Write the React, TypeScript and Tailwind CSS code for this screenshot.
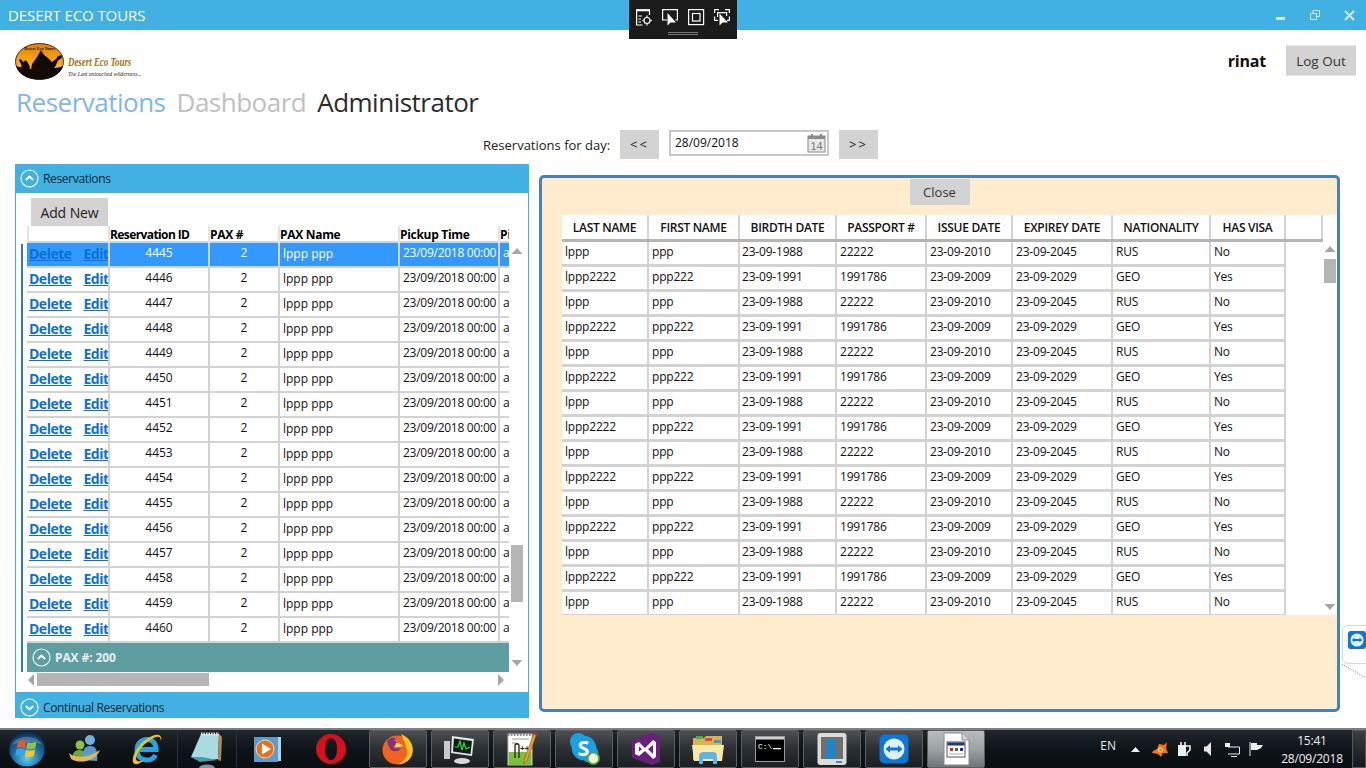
import React from "react";

const leftRows = Array.from({ length: 16 }, (_, i) => 4445 + i);
const rightRows = Array.from({ length: 15 }, (_, i) => i);
const leftCols = "grid grid-cols-[83px_100px_70px_120px_100px_9px]";
const rightCols = "grid grid-cols-[87px_91px_97px_90px_86px_100px_98px_75px]";

function Chevron({ up, dim }: { up: boolean; dim?: boolean }) {
  return (
    <svg width="19" height="19" viewBox="0 0 19 19" className="shrink-0">
      <circle cx="9.5" cy="9.5" r="8.5" fill="none" stroke={dim ? "#e8f2f2" : "#ffffff"} strokeWidth="1.2" />
      <path d={up ? "M5.8 11 L9.5 7.6 L13.2 11" : "M5.8 8 L9.5 11.4 L13.2 8"} fill="none" stroke="#ffffff" strokeWidth="2" />
    </svg>
  );
}

function Tri({ dir, color = "#a6a6a6" }: { dir: "up" | "down" | "left" | "right"; color?: string }) {
  const p = {
    up: "M0 8 L6 1 L12 8 Z",
    down: "M0 1 L12 1 L6 8 Z",
    left: "M7 0 L7 12 L1 6 Z",
    right: "M1 0 L1 12 L7 6 Z",
  }[dir];
  const vertical = dir === "up" || dir === "down";
  return (
    <svg width={vertical ? 12 : 8} height={vertical ? 8 : 12} viewBox={vertical ? "0 0 12 9" : "0 0 8 12"} className="shrink-0">
      <path d={p} fill={color} />
    </svg>
  );
}

function Logo() {
  return (
    <div className="flex h-[37px]">
      <svg width="49" height="37" viewBox="0 0 49 37" className="shrink-0">
        <defs>
          <linearGradient id="sun" x1="0" x2="0" y1="0" y2="1">
            <stop offset="0" stopColor="#e07d0a" />
            <stop offset="0.6" stopColor="#fbb11c" />
            <stop offset="1" stopColor="#f09a15" />
          </linearGradient>
        </defs>
        <ellipse cx="24.5" cy="18.5" rx="24" ry="18" fill="url(#sun)" stroke="#1a1005" strokeWidth="0.8" />
        <path d="M1 23 C8 25 16 27 25 26 C34 25 42 26 48 23 C46 31 36 36.6 24.5 36.6 C12 36.6 3 31 1 23 Z" fill="#100b06" />
        <path d="M16 27 L17 21 L22 14 L26 7 L29 12 L33 15 L37 19 L41 16 L43 13 L47 12 L46.5 15 L43 17.5 L40 24 L36 28 Z" fill="#100b06" />
        <path d="M6 27 L6.5 22 L4 17 L6 16 L8 19 L11 17 L13 20 L15 24 L14 28 Z" fill="#100b06" />
        <text x="24.5" y="6.5" textAnchor="middle" fontSize="4.2" fontWeight="bold" fontFamily="Liberation Serif, serif" fill="#1b1206">Desert Eco Tours</text>
      </svg>
      <div className="flex flex-col ml-[4px] pt-[13px] leading-none">
        <span className="font-['Liberation_Serif',serif] font-bold italic text-[12px] leading-[12px] text-[#a86f14] scale-x-[0.74] origin-left whitespace-nowrap w-[64px]">Desert Eco Tours</span>
        <span className="font-['Liberation_Serif',serif] italic text-[5.6px] leading-[7px] mt-[3px] text-[#222] whitespace-nowrap">The Last untouched wilderness...</span>
      </div>
    </div>
  );
}

function Toolbar() {
  return (
    <div className="absolute left-[629px] top-0 w-[108px] h-[39px] bg-[#1b1b1b] z-10 flex flex-col items-center">
      <svg width="96" height="20" viewBox="0 0 96 20" className="mt-[8px]">
        <g fill="none" stroke="#fff" strokeWidth="1.2">
          <path d="M1.6 3 V17 H7.5 M14.5 3 V7" />
          <path d="M1 2.2 H15" strokeWidth="2.2" />
          <path d="M3.5 8 H7 M3.5 11 H6 M3.5 14 H6" />
          <circle cx="12" cy="12.5" r="3" />
          <path d="M12 7.5 V9.5 M12 15.5 V17.5 M7.3 12.5 H9 M15 12.5 H17" />
          <path d="M32 12 H27.6 V1.6 H42.4 V12 H40.5" />
          <rect x="53.6" y="1.6" width="15" height="15" />
          <rect x="57.5" y="5.5" width="7.5" height="7.5" />
          <path d="M79.6 5 V1.6 H84 M90 1.6 H94.4 V5 M79.6 8.5 V12.4 H83 M94.4 8.5 V12.4 H92" />
          <path d="M82.6 9 V4.6 H91.6 V8" />
        </g>
        <path d="M32.5 5 V17.5 L35.5 14.5 L41 14.5 Z" fill="#fff" />
        <path d="M84.5 5.5 V17.5 L87.5 14.5 L93 14.5 Z" fill="#fff" />
      </svg>
      <div className="w-[30px] h-[3px] mt-[4px] border-y border-[#777]" />
    </div>
  );
}

function WinControls() {
  return (
    <div className="flex items-center gap-[24px] pr-[11px]">
      <svg width="10" height="10" viewBox="0 0 10 10"><rect x="0" y="7" width="9" height="3" fill="#cfeaf6" /></svg>
      <svg width="10" height="10" viewBox="0 0 10 10"><path d="M0.5 3.5 H6.5 V9.5 H0.5 Z M3 3 V0.5 H9.5 V6.5 H7" fill="none" stroke="#cfeaf6" /></svg>
      <svg width="11" height="11" viewBox="0 0 11 11"><path d="M1 1 L10 10 M10 1 L1 10" stroke="#cfeaf6" strokeWidth="2" /></svg>
    </div>
  );
}

function LeftPanel() {
  return (
    <div className="w-[514px] h-[554px] flex flex-col shrink-0">
      <div className="h-[29px] bg-[#41b0e2] flex items-center pl-[5px] gap-[4px] text-[12px] tracking-[-0.35px] text-[#0c2733]">
        <Chevron up />
        <span>Reservations</span>
      </div>
      <div className="h-[499px] bg-white border-x border-[#41b0e2] flex flex-col">
        <button className="ml-[15px] mt-[5px] w-[77px] h-[28px] bg-[#d3d3d3] text-[14px] tracking-[-0.1px] text-[#222] shrink-0">Add New</button>
        <div className="flex flex-1 min-h-0">
          <div className="w-[5px] shrink-0" />
          <div className="w-[6px] shrink-0 mt-[18px] mb-[20px] border-l-2 border-[#2e7fae]" />
          <div className="w-[482px] shrink-0 flex flex-col overflow-hidden">
            <div className={`${leftCols} h-[17px] shrink-0 border-b-2 border-[#d3d3d3] text-[12px] font-bold text-black leading-[17px]`}>
              <div className="border-x-2 border-[#e3e3e3]" />
              <div className="border-r-2 border-[#e3e3e3] tracking-[-0.6px] whitespace-nowrap overflow-hidden">Reservation ID</div>
              <div className="border-r-2 border-[#e3e3e3] tracking-[-0.3px]">PAX #</div>
              <div className="border-r-2 border-[#e3e3e3] tracking-[-0.3px]">PAX Name</div>
              <div className="border-r-2 border-[#e3e3e3] tracking-[-0.3px]">Pickup Time</div>
              <div className="overflow-hidden">Pi</div>
            </div>
            {leftRows.map((id, i) => {
              const sel = i === 0;
              return (
                <div key={id} className={`${leftCols} h-[25px] shrink-0 border-b-2 border-[#d3d3d3] text-[12px] leading-[20px] ${sel ? "bg-[#3399ff] text-white" : "text-[#111]"}`}>
                  <div className="border-r-2 border-[#d3d3d3] flex gap-[12px] overflow-hidden text-[14px] font-bold underline text-[#0b6fd4] tracking-[-0.5px] whitespace-nowrap leading-[21px] pl-[2px]">
                    <span>Delete</span>
                    <span>Edit</span>
                  </div>
                  <div className="border-r-2 border-[#d3d3d3] text-center">{id}</div>
                  <div className="border-r-2 border-[#d3d3d3] text-center">2</div>
                  <div className="border-r-2 border-[#d3d3d3] pl-[3px] leading-[22px]">lppp ppp</div>
                  <div className="border-r-2 border-[#d3d3d3] pl-[3px] tracking-[-0.27px] whitespace-nowrap overflow-hidden">23/09/2018 00:00</div>
                  <div className="pl-[3px] overflow-hidden">a</div>
                </div>
              );
            })}
            <div className="h-[29px] shrink-0 bg-[#5f9ea0] flex items-center pl-[5px] gap-[4px] text-[12px] font-bold text-[#e6efef] tracking-[-0.1px]">
              <Chevron up dim />
              <span>PAX #: 200</span>
            </div>
            <div className="h-[13px] shrink-0 flex items-center mt-[1px]">
              <Tri dir="left" />
              <div className="w-[172px] h-[13px] bg-[#b5b5b5] ml-[2px]" />
              <div className="flex-1" />
              <div className="mr-[4px]"><Tri dir="right" /></div>
            </div>
          </div>
          <div className="w-[14px] shrink-0 flex flex-col items-center pt-[21px] ml-[1px]">
            <Tri dir="up" />
            <div className="w-[12px] h-[57px] bg-[#b5b5b5] mt-[290px]" />
            <div className="mt-[57px]"><Tri dir="down" /></div>
          </div>
        </div>
      </div>
      <div className="h-[26px] bg-[#41b0e2] flex items-center pl-[5px] pt-[5px] gap-[4px] text-[12px] tracking-[-0.35px] text-[#0c2733]">
        <Chevron up={false} />
        <span>Continual Reservations</span>
      </div>
    </div>
  );
}

function RightPanel() {
  const a = ["lppp", "ppp", "23-09-1988", "22222", "23-09-2010", "23-09-2045", "RUS", "No"];
  const b = ["lppp2222", "ppp222", "23-09-1991", "1991786", "23-09-2009", "23-09-2029", "GEO", "Yes"];
  const heads = ["LAST NAME", "FIRST NAME", "BIRDTH DATE", "PASSPORT #", "ISSUE DATE", "EXPIREY DATE", "NATIONALITY", "HAS VISA"];
  const widths = ["w-[87px]", "w-[91px]", "w-[97px]", "w-[90px]", "w-[86px]", "w-[100px]", "w-[98px]", "w-[75px]"];
  return (
    <div className="mt-[11px] w-[801px] h-[537px] bg-[#ffebcd] border-[3px] border-[#4682b4] rounded-[5px] flex flex-col items-center shrink-0">
      <button className="w-[60px] h-[26px] mt-[1px] pt-[1px] bg-[#d3d3d3] text-[13px] text-[#333] shrink-0">Close</button>
      <div className="self-start ml-[20px] mt-[10px] w-[775px] h-[400px] bg-white flex flex-col overflow-hidden">
        <div className="w-[761px] h-[27px] shrink-0 flex border-b-[3px] border-[#b4b4b4] text-[12px] font-semibold text-[#111] tracking-[-0.3px]">
          {heads.map((h, i) => (
            <div key={h} className={`${widths[i]} border-r-2 border-[#d3d3d3] flex items-center justify-center whitespace-nowrap pt-[1px]`}>{h}</div>
          ))}
          <div className="w-[37px] border-r-2 border-[#d3d3d3]" />
        </div>
        <div className="flex flex-1 min-h-0">
          <div className="w-[724px] shrink-0 flex flex-col">
            {rightRows.map((i) => (
              <div key={i} className={`${rightCols} h-[25px] shrink-0 border-b-[3px] border-[#d3d3d3] text-[12px] text-[#111] leading-[20px]`}>
                {(i % 2 ? b : a).map((t, j) => (
                  <div key={j} className={`${j < 2 ? "pl-[3px]" : j === 2 ? "pl-[2px]" : "pl-[3px]"} border-r-2 border-[#d3d3d3] tracking-[-0.2px] whitespace-nowrap overflow-hidden`}>{t}</div>
                ))}
              </div>
            ))}
          </div>
          <div className="w-[14px] ml-[37px] flex flex-col items-center pt-[3px]">
            <Tri dir="up" />
            <div className="w-[12px] h-[24px] bg-[#b5b5b5] mt-[6px]" />
            <div className="mt-[320px]"><Tri dir="down" /></div>
          </div>
        </div>
      </div>
    </div>
  );
}

/* ---------- taskbar icons ---------- */
const Orb = () => (
  <svg width="38" height="38" viewBox="0 0 38 38">
    <defs>
      <radialGradient id="orb" cx="0.5" cy="0.75" r="0.7">
        <stop offset="0" stopColor="#5fd0ee" />
        <stop offset="0.55" stopColor="#1b6ea6" />
        <stop offset="1" stopColor="#0d2f4e" />
      </radialGradient>
    </defs>
    <circle cx="19" cy="19" r="18" fill="url(#orb)" stroke="#0b2238" />
    <path d="M4 15 C8 4 30 4 34 15 C26 11 12 11 4 15 Z" fill="#ffffff" opacity="0.22" />
    <path d="M10 12 C13 10 15 10 18 11.5 L16.8 18 C14 16.5 11.5 16.5 8.8 18 Z" fill="#f0562a" />
    <path d="M19.5 12 C22 13.3 25 13.3 28.5 11.5 L27.3 18 C24 19.5 21 19.5 18.4 18.3 Z" fill="#8cc63e" />
    <path d="M8.5 19.5 C11 18 14 18 16.4 19.5 L15.2 26 C12.8 24.7 10 24.7 7.3 26 Z" fill="#35a6e8" />
    <path d="M18 20 C20.7 21 24 21 27 19.5 L25.8 26 C22.8 27.5 19.5 27.5 16.9 26.3 Z" fill="#fdc32d" />
  </svg>
);
const Messenger = () => (
  <svg width="34" height="34" viewBox="0 0 34 34">
    <circle cx="12" cy="13" r="4.5" fill="#8bc34a" />
    <path d="M5 28 C4 20 7 18 12 18 C16 18 18 21 18 28 Z" fill="#6ea53a" />
    <circle cx="22" cy="8" r="5" fill="#6fb1df" />
    <path d="M15 28 C14 17 17 14 22 14 C28 14 30 18 29 29 Z" fill="#5a9ad0" />
    <path d="M1 21 C8 27 20 26 32 18 C28 28 14 33 3 27 Z" fill="#e7b755" />
  </svg>
);
const IE = () => (
  <svg width="34" height="34" viewBox="0 0 34 34">
    <path d="M8 17.5 H26 C26 11 22 7.5 17 7.5 C11 7.5 7 12 7 18 C7 24 11 28 17 28 C21 28 24 26 25.5 23" fill="none" stroke="#27a4e0" strokeWidth="5" />
    <path d="M29 3 C23 1 10 10 5 20 C2 26 2 31 5 32 C8 33 12 30 14 28 C9 30 6 30 6 26 C7 18 19 7 26 5 C29 4 31 5 31 9 C32 6 31 4 29 3 Z" fill="#f1c01d" />
  </svg>
);
const Notepad = () => (
  <svg width="34" height="38" viewBox="0 0 34 38">
    <path d="M1 27 L11 4 L29 4 L28 29 L10 31 Z" fill="#a9dbe0" />
    <path d="M1 27 L10 32 L28 30 L12 27 Z" fill="#4d98ae" />
    <path d="M29 4 L32 7 L31 31 L28 30 Z" fill="#b08a50" />
    <path d="M11 4 L29 4" stroke="#e6e6e6" strokeWidth="3" strokeDasharray="1.5 1" />
    <ellipse cx="17" cy="38" rx="8" ry="3.5" fill="#dbeaf5" opacity="0.6" />
  </svg>
);
const WMP = () => (
  <svg width="30" height="30" viewBox="0 0 30 30">
    <rect x="5" y="3" width="24" height="24" fill="#b5d3ea" />
    <rect x="2" y="3" width="24" height="25" fill="#5c9ccc" />
    <circle cx="13" cy="15" r="9" fill="#e8731c" stroke="#fbd7b0" />
    <path d="M10 9.5 L19 15 L10 20.5 Z" fill="#fff" />
  </svg>
);
const Opera = () => (
  <svg width="32" height="32" viewBox="0 0 32 32">
    <path fillRule="evenodd" d="M16 1 A15 15 0 1 0 16 31 A15 15 0 1 0 16 1 Z M16 5 C20 5 22 10 22 16 C22 22 20 27 16 27 C12 27 10 22 10 16 C10 10 12 5 16 5 Z" fill="#d8101d" />
  </svg>
);
const Firefox = () => (
  <svg width="34" height="34" viewBox="0 0 34 34">
    <circle cx="16" cy="18" r="14.5" fill="#f0631f" />
    <path d="M20 2 C29 6 33 13 31.5 21 C30 28 24 32 17 32.5 C25 29 28 22 25 15 C24 10 22 6 20 2 Z" fill="#ffc51c" />
    <path d="M6 9 C8 6 12 5 15 6 C12 8 14 10 17 11 C16 13 14 13 12 14 C13 17 16 17 20 16 C18 20 13 20 10 18 C8 16 7 12 6 9 Z" fill="#6a2f94" opacity="0.9" />
    <path d="M15 11 C18 11 22 13 22 14 C19 15 17 15 14 15 Z" fill="#ffe06b" />
  </svg>
);
const TaskMgr = () => (
  <svg width="34" height="34" viewBox="0 0 34 34">
    <rect x="1" y="9" width="6" height="18" fill="#c9c9c9" />
    <path d="M9 4 L31 7 L29 24 L8 21 Z" fill="#dfe5e5" />
    <path d="M11 6.5 L29 9 L27.5 22 L10 19.5 Z" fill="#0a1f14" />
    <path d="M12 15 L15 15 L17 9 L19 18 L21 11 L23 17 L27 15" fill="none" stroke="#32d74b" strokeWidth="1.2" />
    <ellipse cx="19" cy="29" rx="8" ry="3" fill="#d8d8d8" />
  </svg>
);
const NotepadPP = () => (
  <svg width="34" height="36" viewBox="0 0 34 36">
    <rect x="3" y="3" width="24" height="31" fill="#fbfbf5" stroke="#bdbdbd" />
    <rect x="3.5" y="21" width="23" height="13" fill="#7bbf3a" />
    <path d="M3 4 H27" stroke="#888" strokeWidth="2" strokeDasharray="1.5 1.5" />
    <path d="M7 8 H24 M7 12 H12" stroke="#999" />
    <path d="M10 27 V15 C10 12 14 12 14 15 V27" fill="none" stroke="#222" strokeWidth="1.3" />
    <text x="15" y="20" fontSize="8" fontWeight="bold" fill="#222" fontFamily="Liberation Sans, sans-serif">++</text>
    <path d="M32 2 L22 30 L19 33 L19 29 L29 2 Z" fill="#e0a22a" stroke="#7a4b14" strokeWidth="0.5" />
    <path d="M29 1 L33 3 L32 5 L28 3 Z" fill="#b5332a" />
  </svg>
);
const Skype = () => (
  <svg width="32" height="34" viewBox="0 0 34 36">
    <circle cx="11" cy="10" r="9" fill="#1ba0e2" />
    <circle cx="23" cy="23" r="9.5" fill="#1ba0e2" />
    <circle cx="17" cy="17" r="13" fill="#1ba0e2" />
    <text x="16.5" y="25" textAnchor="middle" fontSize="23" fontWeight="bold" fill="#fff" fontFamily="Open Sans, sans-serif">S</text>
    <circle cx="27" cy="28" r="6" fill="#f4f4d8" stroke="#4fa83d" strokeWidth="1.8" />
  </svg>
);
const VS = () => (
  <svg width="32" height="34" viewBox="0 0 32 34">
    <path d="M2 9 L8 6 L22 1 L30 4 L30 30 L22 33 L2 26 Z" fill="#68217a" />
    <path d="M5 12 L9 10 L15 16 L23 8 L26 10 V25 L23 27 L15 19 L9 24 L5 22 Z M9 14.5 V19.5 L12 17 Z M23 13 L18 17 L23 22 Z" fill="#fff" fillRule="evenodd" />
  </svg>
);
const Explorer = () => (
  <svg width="34" height="34" viewBox="0 0 34 34">
    <path d="M2 6 H13 L15 4 H31 V28 H2 Z" fill="#d9b35a" />
    <rect x="5" y="4" width="7" height="3" fill="#49b04a" />
    <rect x="14" y="6" width="7" height="3" fill="#d9493c" />
    <rect x="23" y="8" width="7" height="3" fill="#3a9ad9" />
    <path d="M1 13 H33 L31 29 H3 Z" fill="#fbe9a6" />
    <path d="M8 25 C8 20 11 20 15 20 H20 C25 20 26 21 26 25 V32 H22 V27 H12 V32 H8 Z" fill="#5db5e6" />
  </svg>
);
const Cmd = () => (
  <svg width="30" height="26" viewBox="0 0 30 26">
    <rect x="0.5" y="0.5" width="29" height="25" fill="#000" stroke="#9a9a9a" />
    <rect x="1" y="1" width="28" height="2.5" fill="#d0d0d0" />
    <text x="3" y="13" fontSize="8" fontFamily="Liberation Mono, monospace" fill="#fff">C:\</text>
    <rect x="18" y="12" width="8" height="1.3" fill="#fff" />
  </svg>
);
const VBox = () => (
  <svg width="32" height="34" viewBox="0 0 32 34">
    <rect x="1.5" y="1" width="29" height="32" rx="3" fill="#dcdcd8" />
    <rect x="5" y="5" width="22" height="22" fill="#6f6f6f" />
    <rect x="10" y="7" width="9" height="20" fill="#1c86c8" />
    <rect x="20" y="29" width="6" height="2" fill="#5a7fb0" />
  </svg>
);
const Team = ({ size = 32 }: { size?: number }) => (
  <svg width={size} height={size} viewBox="0 0 32 32">
    <rect x="1.5" y="1.5" width="29" height="29" rx="5" fill="#0e76d8" />
    <circle cx="16" cy="16" r="10.5" fill="#dff1ff" />
    <path d="M7.5 16 L12 12.3 V14.5 H20 V12.3 L24.5 16 L20 19.7 V17.5 H12 V19.7 Z" fill="#0e76d8" />
  </svg>
);
const AppDoc = () => (
  <svg width="30" height="34" viewBox="0 0 30 34">
    <path d="M3 1 H21 L28 8 V33 H3 Z" fill="#fdfdfd" stroke="#8a8a8a" />
    <path d="M21 1 V8 H28" fill="#d8d8d8" stroke="#8a8a8a" />
    <rect x="6" y="10" width="18" height="15" fill="#fff" stroke="#555" />
    <rect x="6.5" y="10.5" width="17" height="3" fill="#20348c" />
    <rect x="9" y="16" width="3" height="3" fill="#d22" />
    <rect x="14" y="16" width="3" height="3" fill="#282" />
    <rect x="19" y="16" width="3" height="3" fill="#22c" />
    <path d="M8 22 H22" stroke="#aaa" />
  </svg>
);

function TaskButton({ children, active }: { children: React.ReactNode; active?: boolean }) {
  return (
    <div className={`w-[58px] h-[38px] shrink-0 rounded-[2px] border border-[#5a5f63] flex items-center justify-center ${active ? "bg-gradient-to-b from-[#b8bcbf] via-[#9da2a5] to-[#6f7478]" : "bg-gradient-to-b from-[#4d5053] via-[#2c2f32] to-[#1c1f22]"}`}>
      {children}
    </div>
  );
}

function Pinned({ children, w }: { children: React.ReactNode; w: string }) {
  return <div className={`${w} h-[38px] shrink-0 flex items-center justify-center`}>{children}</div>;
}

function Taskbar() {
  return (
    <div className="h-[40px] shrink-0 flex items-center border-t-2 border-[#7c8083] bg-gradient-to-b from-[#20262b] via-[#0e1418] to-[#0a0e12] text-white">
      <Pinned w="w-[54px]"><Orb /></Pinned>
      <Pinned w="w-[62px]"><Messenger /></Pinned>
      <Pinned w="w-[62px]"><IE /></Pinned>
      <div className="w-px h-[36px] bg-[#2c3338] -ml-[1px]" />
      <Pinned w="w-[58px]"><Notepad /></Pinned>
      <div className="w-px h-[36px] bg-[#2c3338]" />
      <Pinned w="w-[60px]"><WMP /></Pinned>
      <Pinned w="w-[68px]"><Opera /></Pinned>
      <div className="flex gap-[4px] ml-[4px]">
        <TaskButton><Firefox /></TaskButton>
        <TaskButton><TaskMgr /></TaskButton>
        <TaskButton><NotepadPP /></TaskButton>
        <TaskButton><Skype /></TaskButton>
        <TaskButton><VS /></TaskButton>
        <TaskButton><Explorer /></TaskButton>
        <TaskButton><Cmd /></TaskButton>
        <TaskButton><VBox /></TaskButton>
        <TaskButton><Team /></TaskButton>
        <TaskButton active><AppDoc /></TaskButton>
      </div>
      <div className="flex-1" />
      <span className="text-[12px] text-[#e8e8e8] -mt-[6px] mr-[15px]">EN</span>
      <svg width="9" height="5" viewBox="0 0 9 5" className="mr-[12px]"><path d="M0 5 L4.5 0 L9 5 Z" fill="#eee" /></svg>
      <svg width="16" height="15" viewBox="0 0 16 15" className="mr-[9px]"><path d="M1 9 L5 7 L7 2 L12 3 L15 0 L14 6 L16 11 L11 11 L9 15 L6 12 L0 11 Z" fill="#f7760f" /><circle cx="8.5" cy="8" r="2" fill="none" stroke="#fff" /></svg>
      <svg width="14" height="16" viewBox="0 0 14 16" className="mr-[13px]"><path d="M1 4 H9 V15 H1 Z" fill="#eee" /><path d="M4 1 V5 M8 1 V5 M2 5 H13 V9 L10 12 V15" fill="none" stroke="#eee" strokeWidth="1.6" /></svg>
      <svg width="8" height="14" viewBox="0 0 8 14" className="mr-[13px]"><path d="M0 4.5 H2.5 L7 0 V14 L2.5 9.5 H0 Z" fill="#e6e6e6" /></svg>
      <svg width="15" height="15" viewBox="0 0 15 15" className="mr-[9px]"><path d="M3 5 H14.5 V12 H3 M3 5 V1 M6 14.5 H12" fill="none" stroke="#eee" /><rect x="0" y="1" width="5" height="4" fill="#eee" /></svg>
      <svg width="14" height="14" viewBox="0 0 14 14" className="mr-[16px]"><path d="M1 0 V14" stroke="#eee" /><path d="M2 1 H8 V3 H14 L12 6 L8 8 H2 Z" fill="#eee" /></svg>
      <div className="w-[66px] flex flex-col items-center text-[12px] leading-[18px] pt-[2px] text-[#f0f0f0] tracking-[-0.2px]">
        <span>15:41</span>
        <span>28/09/2018</span>
      </div>
      <div className="w-[14px] h-[38px] ml-[7px] border border-[#55595c] bg-gradient-to-b from-[#3b3f42] to-[#15181b]" />
    </div>
  );
}

export default function App() {
  return (
    <div className="w-[1366px] h-[768px] relative overflow-hidden flex flex-col bg-white font-['Open_Sans','Noto_Sans',sans-serif]">
      <Toolbar />
      <div className="h-[30px] shrink-0 bg-[#41b0e2] flex items-center justify-between pl-[8px] text-white">
        <span className="text-[15px] tracking-[-0.1px]">DESERT ECO TOURS</span>
        <WinControls />
      </div>
      <div className="flex-1 min-h-0 flex flex-col">
        <div className="h-[50px] shrink-0 flex justify-between items-start pl-[15px] pr-[10px]">
          <div className="mt-[13px]"><Logo /></div>
          <div className="flex items-center mt-[15px]">
            <span className="text-[16px] font-bold text-[#111] mr-[20px] tracking-[-0.2px]">rinat</span>
            <button className="w-[70px] h-[31px] pt-[1px] bg-[#d3d3d3] border-y border-[#e6e6e6] text-[13.5px] text-[#333]">Log Out</button>
          </div>
        </div>
        <div className="h-[44px] shrink-0 flex items-center pl-[16px] gap-[11px] text-[26px] tracking-[-0.5px]">
          <span className="text-[#7db8e8]">Reservations</span>
          <span className="text-[#c0c0c0]">Dashboard</span>
          <span className="text-[#2b2b2b]">Administrator</span>
        </div>
        <div className="h-[34px] mt-[6px] shrink-0 flex items-start pl-[483px] text-[13px] text-[#222]">
          <span className="w-[137px] h-[29px] pt-[6px] whitespace-nowrap">Reservations for day:</span>
          <button className="w-[39px] h-[29px] bg-[#d3d3d3] text-[13px] tracking-[2px]">&lt;&lt;</button>
          <div className="w-[160px] h-[26px] ml-[10px] border-2 border-[#c8c8c8] flex items-center justify-between pl-[4px] pr-[1px] text-[12px] text-[#111]">
            <span>28/09/2018</span>
            <svg width="19" height="20" viewBox="0 0 19 20">
              <rect x="1" y="3" width="17" height="16" fill="#e9e9e9" stroke="#8a8a8a" />
              <rect x="1" y="3" width="17" height="3" fill="#8a8a8a" />
              <rect x="4" y="1" width="2" height="4" fill="#8a8a8a" />
              <rect x="13" y="1" width="2" height="4" fill="#8a8a8a" />
              <text x="9.5" y="17" textAnchor="middle" fontSize="11" fill="#777" fontFamily="Liberation Sans, sans-serif">14</text>
            </svg>
          </div>
          <button className="w-[39px] h-[29px] ml-[10px] bg-[#d3d3d3] text-[13px] tracking-[2px]">&gt;&gt;</button>
        </div>
        <div className="flex items-start pl-[15px] gap-[10px]">
          <LeftPanel />
          <RightPanel />
        </div>
      </div>
      <div className="absolute left-[1342px] top-[625px] w-[30px] h-[39px] bg-white border border-[#d8d8d8] rounded-l-[6px] flex items-start pt-[4px] pl-[4px]">
        <Team size={20} />
      </div>
      <svg width="24" height="16" viewBox="0 0 24 16" className="absolute left-[1342px] top-[664px]">
        <path d="M0 0 L24 14" stroke="#777" strokeDasharray="1 1.5" fill="none" />
      </svg>
      <Taskbar />
    </div>
  );
}
